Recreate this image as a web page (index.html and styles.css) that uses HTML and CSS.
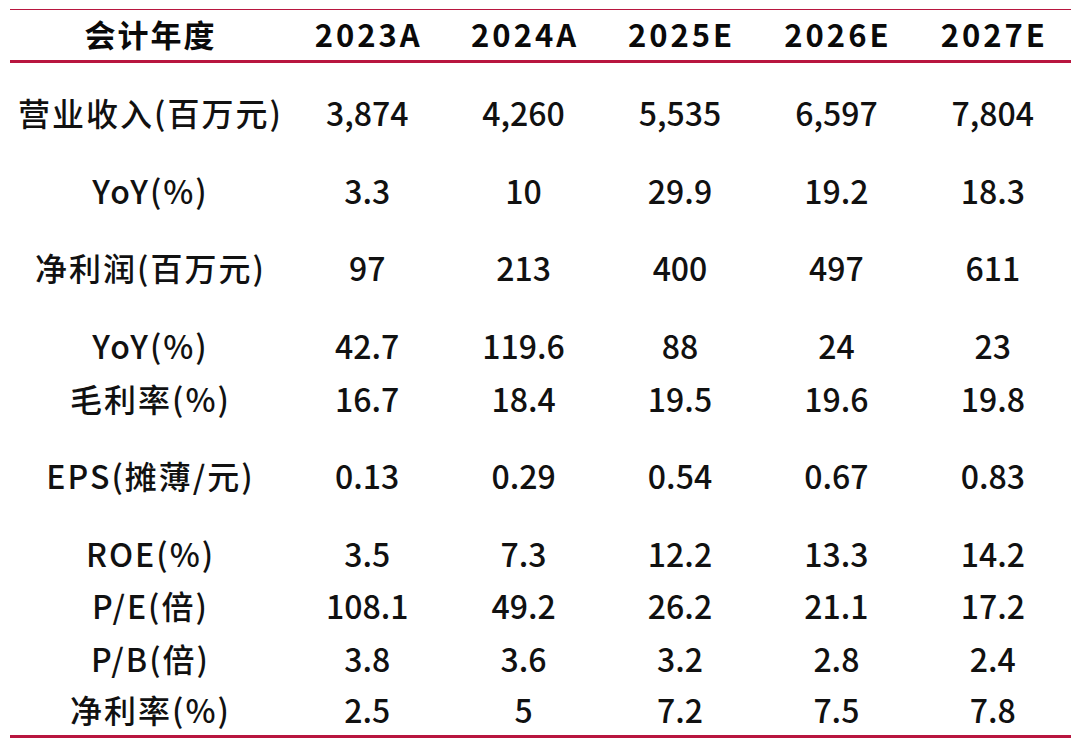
FILE: index.html
```html
<!DOCTYPE html>
<html lang="zh-CN">
<head>
<meta charset="utf-8">
<title>盈利预测</title>
<link rel="stylesheet" href="styles.css">
</head>
<body>
<div class="table">
  <div class="row head">
    <div class="cell label">会计年度</div>
    <div class="cell">2023A</div>
    <div class="cell">2024A</div>
    <div class="cell">2025E</div>
    <div class="cell">2026E</div>
    <div class="cell">2027E</div>
  </div>
  <div class="row sp">
    <div class="cell label">营业收入(百万元)</div>
    <div class="cell">3,874</div><div class="cell">4,260</div><div class="cell">5,535</div><div class="cell">6,597</div><div class="cell">7,804</div>
  </div>
  <div class="row sp">
    <div class="cell label">YoY(%)</div>
    <div class="cell">3.3</div><div class="cell">10</div><div class="cell">29.9</div><div class="cell">19.2</div><div class="cell">18.3</div>
  </div>
  <div class="row sp">
    <div class="cell label">净利润(百万元)</div>
    <div class="cell">97</div><div class="cell">213</div><div class="cell">400</div><div class="cell">497</div><div class="cell">611</div>
  </div>
  <div class="row sp">
    <div class="cell label">YoY(%)</div>
    <div class="cell">42.7</div><div class="cell">119.6</div><div class="cell">88</div><div class="cell">24</div><div class="cell">23</div>
  </div>
  <div class="row">
    <div class="cell label">毛利率(%)</div>
    <div class="cell">16.7</div><div class="cell">18.4</div><div class="cell">19.5</div><div class="cell">19.6</div><div class="cell">19.8</div>
  </div>
  <div class="row sp">
    <div class="cell label">EPS(摊薄/元)</div>
    <div class="cell">0.13</div><div class="cell">0.29</div><div class="cell">0.54</div><div class="cell">0.67</div><div class="cell">0.83</div>
  </div>
  <div class="row sp">
    <div class="cell label">ROE(%)</div>
    <div class="cell">3.5</div><div class="cell">7.3</div><div class="cell">12.2</div><div class="cell">13.3</div><div class="cell">14.2</div>
  </div>
  <div class="row">
    <div class="cell label">P/E(倍)</div>
    <div class="cell">108.1</div><div class="cell">49.2</div><div class="cell">26.2</div><div class="cell">21.1</div><div class="cell">17.2</div>
  </div>
  <div class="row">
    <div class="cell label">P/B(倍)</div>
    <div class="cell">3.8</div><div class="cell">3.6</div><div class="cell">3.2</div><div class="cell">2.8</div><div class="cell">2.4</div>
  </div>
  <div class="row last">
    <div class="cell label">净利率(%)</div>
    <div class="cell">2.5</div><div class="cell">5</div><div class="cell">7.2</div><div class="cell">7.5</div><div class="cell">7.8</div>
  </div>
</div>
</body>
</html>
```

FILE: styles.css
```css
html, body {
  margin: 0;
  padding: 0;
  background: #ffffff;
}
body {
  width: 1080px;
  height: 748px;
  overflow: hidden;
  font-family: "Noto Sans CJK SC", "Noto Sans", sans-serif;
  color: #111111;
}
.table {
  margin: 9px 9px 0 10px;
  border-top: 1.5px solid #b8163f;
  border-bottom: 3.5px solid #b8163f;
  display: flex;
  flex-direction: column;
}
.row {
  display: grid;
  grid-template-columns: 279px repeat(5, 1fr);
  align-items: center;
  height: 52.6px;
  font-size: 32px;
  font-weight: 500;
}
.row.head {
  height: 50px;
  border-bottom: 3px solid #b8163f;
  font-size: 31px;
  font-weight: 700;
  color: #0a0a0a;
}
.row.head .cell {
  letter-spacing: 3px;
  padding-left: 3px;
}
.row.head .cell.label {
  letter-spacing: 2px;
  padding-left: 2px;
}
.row.sp {
  margin-top: 25px;
}
.row.last {
  height: 49px;
}
.cell {
  text-align: center;
  line-height: 1;
  white-space: nowrap;
  padding-bottom: 4px;
}
.cell.label {
  letter-spacing: 2px;
  padding-left: 2px;
}
```
